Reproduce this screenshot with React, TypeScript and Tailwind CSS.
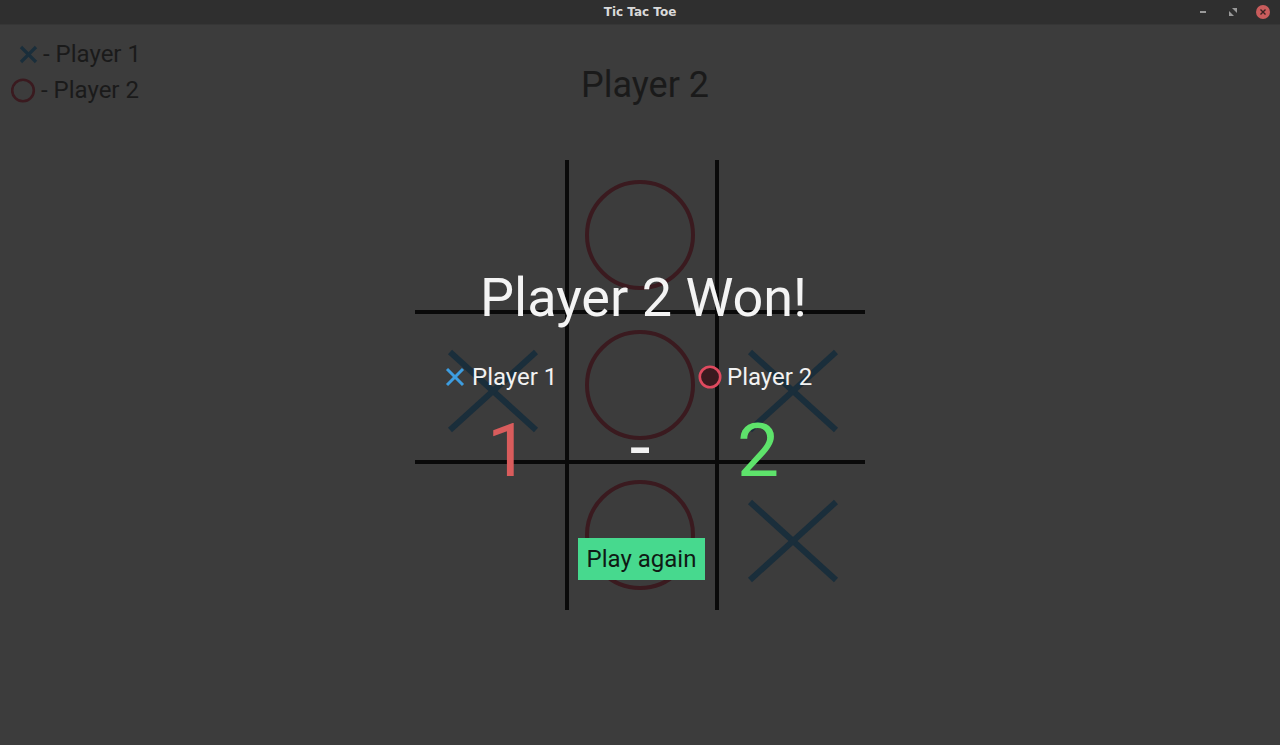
import React from "react";

const XMark = ({ color, w = 6 }: { color: string; w?: number }) => (
  <svg width="150" height="150" viewBox="0 0 150 150" className="block">
    <line x1="35" y1="42" x2="121" y2="120" stroke={color} strokeWidth={w} />
    <line x1="121" y1="42" x2="35" y2="120" stroke={color} strokeWidth={w} />
  </svg>
);

const OMark = () => (
  <svg width="150" height="150" viewBox="0 0 150 150" className="block">
    <circle cx="75" cy="75" r="53" fill="none" stroke="#3a1a1f" strokeWidth="4" />
  </svg>
);

export default function App() {
  const cells: (string | null)[] = [null, "O", null, "X", "O", "X", null, "O", "X"];
  return (
    <div
      className="relative w-[1280px] h-[745px] overflow-hidden bg-[#3c3c3c]"
      style={{ fontFamily: "Roboto, 'Liberation Sans', sans-serif" }}
    >
      {/* title bar */}
      <div className="relative h-[25px] bg-[#2f2f2f] border-b border-[#363636] flex items-center justify-center">
        <span
          className="text-[12px] font-bold text-[#dadada]"
          style={{ fontFamily: "'DejaVu Sans', 'Liberation Sans', sans-serif" }}
        >
          Tic Tac Toe
        </span>
        <div className="absolute right-[10px] top-[5px] flex items-center gap-[16px]">
          <div className="w-[14px] h-[14px] flex items-center justify-center">
            <div className="w-[6px] h-[2px] bg-[#9a9a9a]" />
          </div>
          <div className="w-[14px] h-[14px] flex items-center justify-center">
            <svg width="8" height="8" viewBox="0 0 8 8">
              <path d="M3 0 H8 V5 Z" fill="#9a9a9a" />
              <path d="M0 3 V8 H5 Z" fill="#9a9a9a" />
            </svg>
          </div>
          <div className="w-[14px] h-[14px] rounded-full bg-[#c95c5c] flex items-center justify-center">
            <svg width="6" height="6" viewBox="0 0 6 6">
              <path d="M0.5 0.5 L5.5 5.5 M5.5 0.5 L0.5 5.5" stroke="#3a2222" strokeWidth="1.4" />
            </svg>
          </div>
        </div>
      </div>

      {/* legend */}
      <div className="absolute left-[11px] top-[42px] flex flex-col text-[24px] leading-none text-[#1a1a1a]">
        <div className="flex items-center h-[24px] whitespace-nowrap">
          <svg width="27" height="19" viewBox="0 0 27 19" className="block">
            <line x1="10" y1="2" x2="25" y2="17" stroke="#1a2e3b" strokeWidth="3.2" />
            <line x1="25" y1="2" x2="10" y2="17" stroke="#1a2e3b" strokeWidth="3.2" />
          </svg>
          <span className="ml-[5px]">- Player 1</span>
        </div>
        <div className="flex items-center h-[24px] mt-[12px] whitespace-nowrap">
          <svg width="25" height="25" viewBox="0 0 25 25" className="block">
            <circle cx="12" cy="12.5" r="10.8" fill="none" stroke="#3a1a1f" strokeWidth="2.6" />
          </svg>
          <span className="ml-[5px]">- Player 2</span>
        </div>
      </div>

      {/* turn label */}
      <div className="ml-[581px] mt-[42px] h-[36px] text-[36px] leading-none text-[#1a1a1a] whitespace-nowrap">
        Player 2
      </div>

      {/* board */}
      <div className="relative ml-[415px] mt-[57px] w-[450px] h-[450px]">
        <div className="grid grid-cols-3 grid-rows-3 w-[450px] h-[450px]">
          {cells.map((c, i) => (
            <div key={i} className="w-[150px] h-[150px]">
              {c === "X" ? <XMark color="#1a2e3b" /> : c === "O" ? <OMark /> : null}
            </div>
          ))}
        </div>
        <div className="absolute left-[150px] top-0 w-[4px] h-[450px] bg-[#0a0a0a]" />
        <div className="absolute left-[300px] top-0 w-[4px] h-[450px] bg-[#0a0a0a]" />
        <div className="absolute left-0 top-[150px] w-[450px] h-[4px] bg-[#0a0a0a]" />
        <div className="absolute left-0 top-[300px] w-[450px] h-[4px] bg-[#0a0a0a]" />
      </div>

      {/* game over overlay */}
      <div className="absolute inset-0 flex flex-col">
        <div className="mt-[271px] h-[54px] text-center text-[54px] leading-none text-[#f4f4f4] pl-[7px] whitespace-nowrap">
          Player 2 Won!
        </div>
        <div className="mt-[40px] h-[24px] flex items-center text-[24px] leading-none text-[#f2f2f2] whitespace-nowrap">
          <div className="ml-[445px] w-[253px] flex items-center">
            <svg width="20" height="20" viewBox="0 0 20 20" className="block">
              <line x1="2" y1="2" x2="18" y2="18" stroke="#3d9de0" strokeWidth="3" />
              <line x1="18" y1="2" x2="2" y2="18" stroke="#3d9de0" strokeWidth="3" />
            </svg>
            <span className="ml-[7px]">Player 1</span>
          </div>
          <svg width="24" height="24" viewBox="0 0 24 24" className="block">
            <circle cx="12" cy="12" r="10.2" fill="#3a1a1f" stroke="#e04a5f" strokeWidth="2.6" />
          </svg>
          <span className="ml-[5px]">Player 2</span>
        </div>
        <div className="mt-[24px] h-[75px] flex text-[75px] leading-none">
          <div className="ml-[478px] w-[60px] text-center text-[#d95c5c]">1</div>
          <div className="ml-[82px] w-[40px] text-center text-[#f2f2f2] -mt-[3px]">-</div>
          <div className="ml-[68px] w-[60px] text-center text-[#5ee36b]">2</div>
        </div>
        <div className="mt-[50px] ml-[578px] w-[127px] h-[42px] bg-[#47d98e] flex items-center justify-center text-[24px] leading-none text-[#0f1a14] whitespace-nowrap">
          Play again
        </div>
      </div>
    </div>
  );
}
